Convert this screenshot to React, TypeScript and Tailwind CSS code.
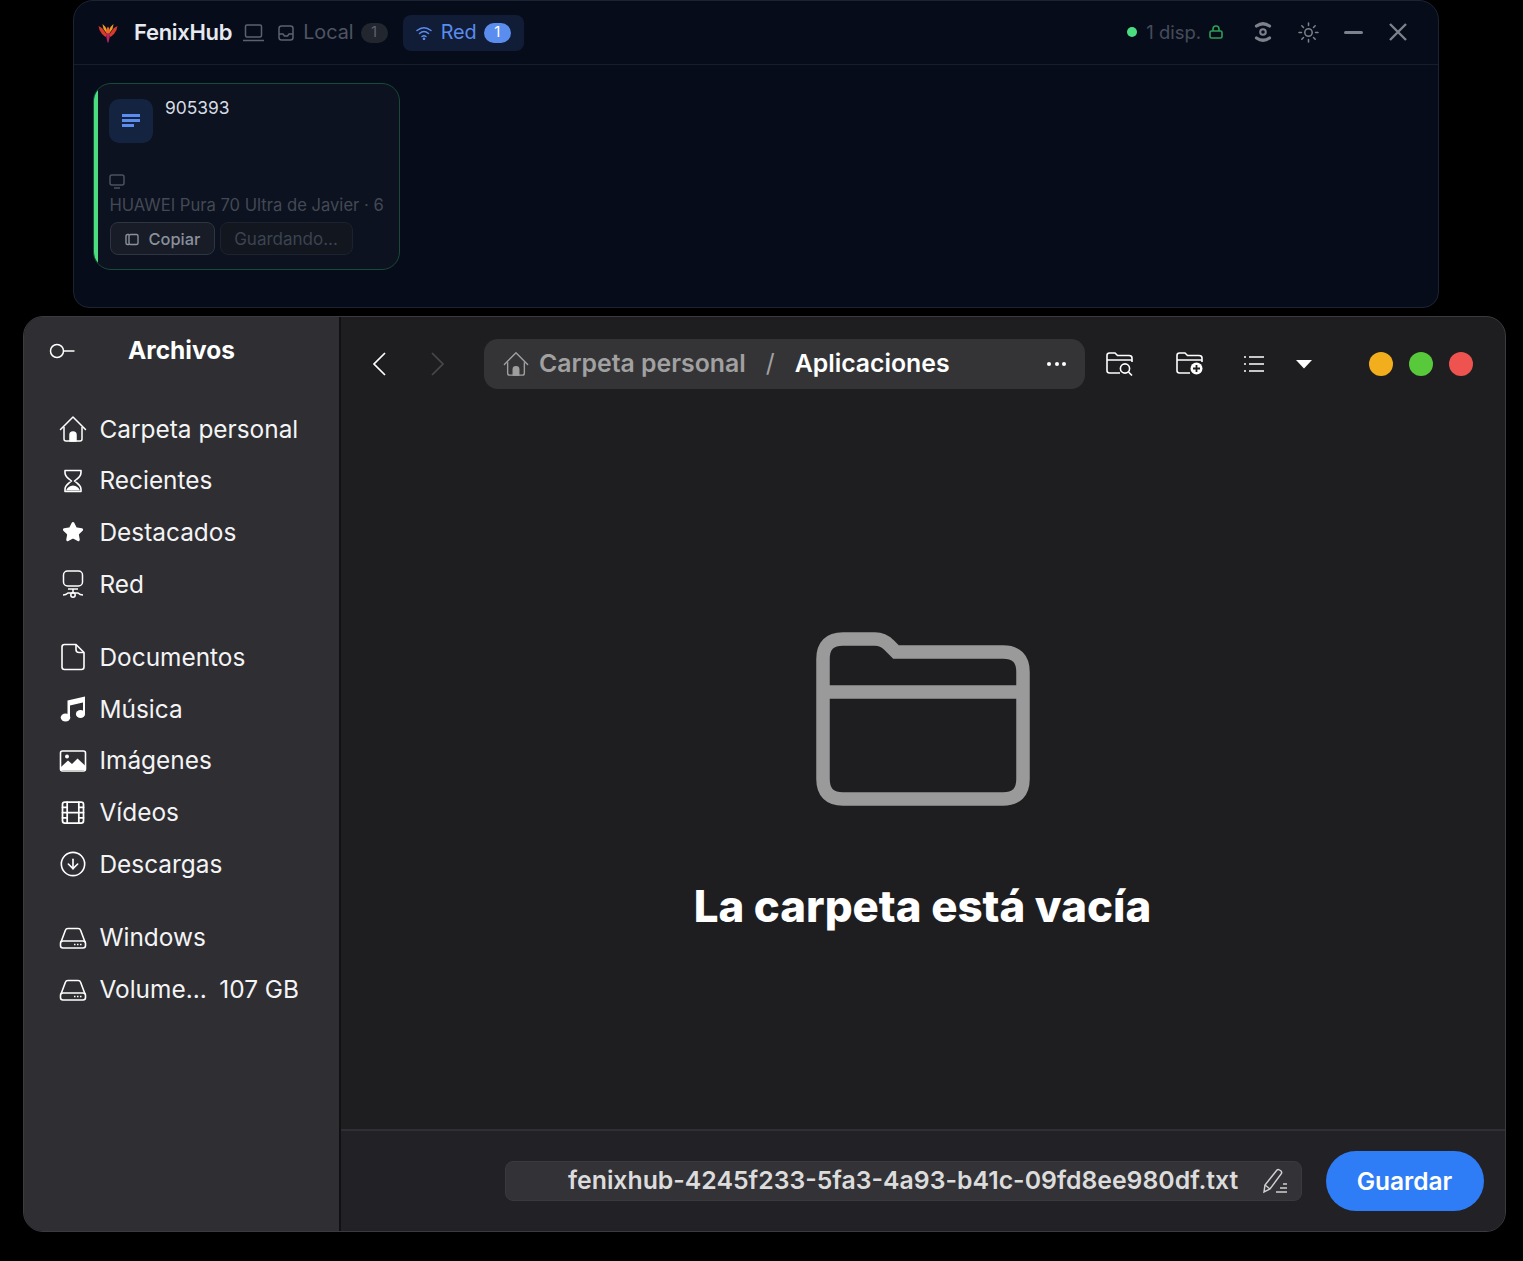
import type { ReactNode } from "react";
import { ArrowDownCircle, Film, Star } from "lucide-react";

// little phoenix logo
function PhoenixLogo() {
  return (
    <svg width="20" height="20" viewBox="0 0 20 20">
      <path d="M0.5 3 L4 5 L7 9 L9 12 L7.5 14 L4 11 L1.5 7 Z" fill="#d93a2b" />
      <path d="M19.5 3 L16 5 L13 9 L11 12 L12.5 14 L16 11 L18.5 7 Z" fill="#d93a2b" />
      <path d="M4.5 1 L7.5 4 L9 8 L8.5 10 L5.5 6 Z" fill="#f0a023" />
      <path d="M15.5 1 L12.5 4 L11 8 L11.5 10 L14.5 6 Z" fill="#f0a023" />
      <path d="M8.5 6 L10 3.5 L11.5 6 L12 10 L10 12 L8 10 Z" fill="#f26a21" />
      <path d="M8 11 L10 10 L12 11 L11.5 15 L10.5 19.5 L9.5 19.5 L8.5 15 Z" fill="#b8245f" />
    </svg>
  );
}

function HomeIcon({ color = "white", size = 28 }: { color?: string; size?: number }) {
  return (
    <svg width={size} height={size} viewBox="0 0 28 28" fill="none" stroke={color} strokeWidth="1.5" strokeLinejoin="round">
      <path d="M1.5 14.5 L14 2 L26.5 14.5" strokeLinecap="round" />
      <path d="M5 12 V24 Q5 26 7 26 H21 Q23 26 23 24 V12" />
      <path d="M11 26 V20 Q11 17 14 17 Q17 17 17 20 V26 Z" fill={color} />
    </svg>
  );
}

function HourglassIcon() {
  return (
    <svg width="28" height="28" viewBox="0 0 28 28" fill="none" stroke="white" strokeWidth="1.6" strokeLinejoin="round">
      <path d="M6 3.5 H22 V5.5 Q22 9 18 12 L15.5 14 L18 16 Q22 19 22 22.5 V24.5 H6 V22.5 Q6 19 10 16 L12.5 14 L10 12 Q6 9 6 5.5 Z" />
      <path d="M7 23.5 Q9 19 14 18.5 Q19 19 21 23.5 Z" fill="white" stroke="none" />
    </svg>
  );
}

function NetworkIcon() {
  return (
    <svg width="28" height="28" viewBox="0 0 28 28" fill="none" stroke="white" strokeWidth="1.5">
      <rect x="4.5" y="1" width="19" height="15" rx="4" />
      <path d="M9 19 H19" />
      <path d="M14 19 V23" />
      <path d="M4 25 Q7 25 9 23 H19 Q21 25 24 25" />
      <circle cx="14" cy="25" r="2.2" />
    </svg>
  );
}

function DocIcon() {
  return (
    <svg width="28" height="28" viewBox="0 0 28 28" fill="none" stroke="white" strokeWidth="1.6" strokeLinejoin="round">
      <path d="M3 4 Q3 1.5 5.5 1.5 H17 L25 9.5 V24 Q25 26.5 22.5 26.5 H5.5 Q3 26.5 3 24 Z" />
      <path d="M17 1.5 V6.5 Q17 9.5 20 9.5 H25" />
    </svg>
  );
}

function MusicIcon() {
  return (
    <svg width="28" height="28" viewBox="0 0 28 28" fill="white">
      <path d="M8.5 5.5 L26 1.5 V7 L11 10.5 V22 H8.5 Z" />
      <path d="M24 6 H26 V19 H24 Z" />
      <ellipse cx="6.5" cy="22.5" rx="4.8" ry="4" />
      <ellipse cx="21.5" cy="19" rx="4.6" ry="4" />
    </svg>
  );
}

function ImageIcon() {
  return (
    <svg width="28" height="28" viewBox="0 0 28 28" fill="none" stroke="white" strokeWidth="1.6">
      <rect x="1.5" y="4" width="25" height="20" rx="2" />
      <circle cx="8" cy="9.5" r="2" fill="white" stroke="none" />
      <path d="M2 23 L2 20 L9 13.5 L13 17 L18.5 11.5 L26 18.5 V23 Z" fill="white" stroke="none" />
    </svg>
  );
}

function DriveIcon() {
  return (
    <svg width="28" height="28" viewBox="0 0 28 28" fill="none" stroke="white" strokeWidth="1.6" strokeLinejoin="round">
      <path d="M2 19 L6.5 7 Q7 5.5 9 5.5 H19 Q21 5.5 21.5 7 L26 19" />
      <rect x="1.5" y="18" width="25" height="7" rx="2.5" />
      <path d="M15 21.5 H22.5" strokeDasharray="1.5 1.5" />
    </svg>
  );
}

function SidebarRow({ icon, label, right }: { icon: ReactNode; label: string; right?: string }) {
  return (
    <div className="flex h-[51.7px] items-center pl-[34.5px] pr-[40px] text-[24.4px] whitespace-nowrap text-[#f4f4f5]">
      <div className="flex w-[28px] shrink-0 justify-center">{icon}</div>
      <span className="ml-[13px]">{label}</span>
      {right && <span className="ml-auto">{right}</span>}
    </div>
  );
}

function FenixWindow() {
  return (
    <div className="ml-[73px] h-[308px] w-[1366px] rounded-[20px] rounded-b-[16px] border border-[#1c2433] bg-[#070c1a]">
      <div className="flex h-[64px] items-center border-b border-[#161d2c] text-[19.8px]">
        <div className="ml-[24px]">
          <PhoenixLogo />
        </div>
        <span className="ml-[16px] text-[22px] font-semibold tracking-[-0.3px] text-[#e6e9f0]">FenixHub</span>
        <svg className="ml-[11px]" width="21" height="18" viewBox="0 0 21 18" fill="none" stroke="#5b6170" strokeWidth="1.5">
          <rect x="2.5" y="1" width="16" height="12" rx="1.5" />
          <path d="M0 16.5 H21" />
        </svg>
        <svg className="ml-[14px]" width="16" height="16" viewBox="0 0 16 16" fill="none" stroke="#5b6170" strokeWidth="1.5" strokeLinejoin="round">
          <rect x="1" y="1" width="14" height="14" rx="2.5" />
          <path d="M1 9 H5 L6.5 11 H9.5 L11 9 H15" />
        </svg>
        <span className="ml-[9px] text-[#4f5563]">Local</span>
        <span className="ml-[7px] flex h-[20px] w-[27px] items-center justify-center rounded-full bg-[#22262f] text-[15px] text-[#5b6170]">1</span>
        <div className="ml-[15px] flex h-[36px] w-[121px] items-center rounded-[8px] bg-[#111c36] pl-[13px]">
          <svg width="16" height="14" viewBox="0 0 16 14" fill="none" stroke="#5b8def" strokeWidth="1.5" strokeLinecap="round">
            <path d="M1 4.5 Q8 -1 15 4.5" />
            <path d="M3.5 7.5 Q8 3.5 12.5 7.5" />
            <path d="M6 10.5 Q8 9 10 10.5" />
            <circle cx="8" cy="12.8" r="0.6" />
          </svg>
          <span className="ml-[9px] text-[#5b8def]">Red</span>
          <span className="ml-[7px] flex h-[20px] w-[27px] items-center justify-center rounded-full bg-[#5b8def] text-[15px] text-white">1</span>
        </div>
        <div className="ml-auto flex items-center">
          <span className="h-[10px] w-[10px] rounded-full bg-[#4ade80]" />
          <span className="ml-[9px] text-[18.4px] text-[#464c5a]">1 disp.</span>
          <svg className="ml-[8px]" width="14" height="14" viewBox="0 0 14 14" fill="none" stroke="#2f9e57" strokeWidth="1.6">
            <rect x="1" y="6" width="12" height="7" rx="1.5" />
            <path d="M4 6 V4 Q4 1 7 1 Q10 1 10 4 V6" />
          </svg>
          <svg className="ml-[31px]" width="18" height="22" viewBox="0 0 18 22" fill="none" stroke="#7d828c" strokeLinecap="round">
            <path d="M2.5 5 Q9 0.5 15.5 5" strokeWidth="3.2" />
            <path d="M2.5 17 Q9 21.5 15.5 17" strokeWidth="3.2" />
            <circle cx="9" cy="11" r="2.8" strokeWidth="2" />
          </svg>
          <svg className="ml-[26px]" width="21" height="21" viewBox="0 0 21 21" fill="none" stroke="#7d828c" strokeWidth="1.5" strokeLinecap="round">
            <circle cx="10.5" cy="10.5" r="3.7" />
            <path d="M10.5 1 V3.5 M10.5 17.5 V20 M1 10.5 H3.5 M17.5 10.5 H20 M3.8 3.8 L5.5 5.5 M15.5 15.5 L17.2 17.2 M3.8 17.2 L5.5 15.5 M15.5 5.5 L17.2 3.8" />
          </svg>
          <div className="ml-[25px] h-[2.5px] w-[19px] rounded-full bg-[#7d828c]" />
          <svg className="ml-[26px] mr-[31px]" width="18" height="18" viewBox="0 0 18 18" fill="none" stroke="#7d828c" strokeWidth="2.4">
            <path d="M1 1 L17 17 M17 1 L1 17" />
          </svg>
        </div>
      </div>
      <div className="pl-[19px] pt-[18px]">
        <div className="relative h-[187px] w-[307px] overflow-hidden rounded-[18px] border border-[#184a35] bg-[#0c121f]">
          <div className="absolute inset-y-0 left-0 w-[4px] bg-[#4ade80]" />
          <div className="flex pl-[15px] pt-[14.5px]">
            <div className="flex h-[44px] w-[44px] items-center justify-center rounded-[10px] bg-[#14233f]">
              <div className="flex flex-col gap-[2px]">
                <div className="h-[3px] w-[18px] bg-[#5b8def]" />
                <div className="h-[3px] w-[18px] bg-[#5b8def]" />
                <div className="h-[3px] w-[12px] bg-[#5b8def]" />
              </div>
            </div>
            <span className="ml-[12px] text-[17.4px] leading-[18px] text-[#d8dce3]">905393</span>
          </div>
          <div className="pl-[15px] pt-[31px]">
            <svg width="16" height="15" viewBox="0 0 16 15" fill="none" stroke="#4b515d" strokeWidth="1.5">
              <rect x="1" y="1" width="14" height="10" rx="2" />
              <path d="M5 14 H11" />
            </svg>
          </div>
          <div className="pl-[15.5px] pt-[6px] text-[16.6px] leading-[20px] whitespace-nowrap text-[#434955]">HUAWEI Pura 70 Ultra de Javier · 6</div>
          <div className="mt-[7px] flex gap-[5px] pl-[15.5px] text-[17px]">
            <div className="flex h-[33px] w-[105px] items-center rounded-[8px] border border-[#2f3541] bg-[#171c27] pl-[14px] pt-[2px] text-[#8b909b]">
              <svg width="14" height="13" viewBox="0 0 14 13" fill="none" stroke="#8b909b" strokeWidth="1.4">
                <rect x="4" y="1.5" width="9" height="10" rx="1.5" />
                <path d="M4 1.5 H2.5 Q1 1.5 1 3 V10 Q1 11.5 2.5 11.5 H4" />
              </svg>
              <span className="ml-[10px] text-[16.4px] font-medium">Copiar</span>
            </div>
            <div className="flex h-[33px] w-[133px] items-center justify-center rounded-[8px] border border-[#1d222e] bg-[#11161f] pt-[4px] text-[#3d434f]">Guardando...</div>
          </div>
        </div>
      </div>
    </div>
  );
}

function FilesWindow() {
  return (
    <div className="mt-[8px] ml-[23px] flex h-[916px] w-[1483px] overflow-hidden rounded-[20px] border border-[#3a3a3f] bg-[#1e1e20]">
      <aside className="w-[315px] shrink-0 bg-[#2e2e33]">
        <div className="flex h-[67px] items-center pl-[24px]">
          <svg width="27" height="16" viewBox="0 0 27 16" fill="none" stroke="white" strokeWidth="1.5">
            <circle cx="9" cy="8" r="6.5" />
            <path d="M15.5 8 H26.5" />
          </svg>
          <span className="ml-[53px] text-[24.5px] font-bold text-white">Archivos</span>
        </div>
        <div className="pt-[19.1px]">
          <SidebarRow icon={<HomeIcon />} label="Carpeta personal" />
          <SidebarRow icon={<HourglassIcon />} label="Recientes" />
          <SidebarRow icon={<Star size={22} fill="white" color="white" />} label="Destacados" />
          <SidebarRow icon={<NetworkIcon />} label="Red" />
          <div className="h-[21.5px]" />
          <SidebarRow icon={<DocIcon />} label="Documentos" />
          <SidebarRow icon={<MusicIcon />} label="Música" />
          <SidebarRow icon={<ImageIcon />} label="Imágenes" />
          <SidebarRow icon={<Film size={29} color="white" strokeWidth={1.5} />} label="Vídeos" />
          <SidebarRow icon={<ArrowDownCircle size={28} color="white" strokeWidth={1.4} />} label="Descargas" />
          <div className="h-[21.5px]" />
          <SidebarRow icon={<DriveIcon />} label="Windows" />
          <SidebarRow icon={<DriveIcon />} label="Volume..." right="107 GB" />
        </div>
      </aside>
      <div className="w-[2px] shrink-0 bg-[#111113]" />
      <main className="flex min-w-0 flex-1 flex-col">
        <div className="flex h-[94px] items-center">
          <svg className="ml-[30px]" width="16" height="26" viewBox="0 0 16 26" fill="none" stroke="white" strokeWidth="1.7">
            <path d="M14 2 L3 13 L14 24" />
          </svg>
          <svg className="ml-[42px]" width="16" height="26" viewBox="0 0 16 26" fill="none" stroke="#48484b" strokeWidth="1.7">
            <path d="M3 2 L14 13 L3 24" />
          </svg>
          <div className="ml-[39px] flex h-[50px] w-[601px] items-center rounded-[14px] bg-[#343437] pl-[19px] pr-[19px] text-[24.8px] font-semibold">
            <HomeIcon color="#9f9f9f" size={26} />
            <span className="ml-[10px] text-[#a1a1a1]">Carpeta personal</span>
            <span className="ml-[20px] font-normal text-[#a1a1a1]">/</span>
            <span className="ml-[20px] text-white">Aplicaciones</span>
            <div className="ml-auto flex gap-[3.5px]">
              <span className="h-[4px] w-[4px] rounded-full bg-white" />
              <span className="h-[4px] w-[4px] rounded-full bg-white" />
              <span className="h-[4px] w-[4px] rounded-full bg-white" />
            </div>
          </div>
          <svg className="ml-[21px]" width="28" height="24" viewBox="0 0 28 24" fill="none" stroke="white" strokeWidth="1.6">
            <path d="M14 21 H3.5 Q1 21 1 18.5 V3.5 Q1 1 3.5 1 H9 L11.5 3.5 H23 Q26 3.5 26 6 V10" />
            <path d="M1 8 H26" />
            <circle cx="19" cy="16.5" r="4.6" />
            <path d="M22.5 20 L26 23.5" />
          </svg>
          <svg className="ml-[42px]" width="28" height="24" viewBox="0 0 28 24" fill="none" stroke="white" strokeWidth="1.6">
            <path d="M14 21 H3.5 Q1 21 1 18.5 V3.5 Q1 1 3.5 1 H9 L11.5 3.5 H23 Q26 3.5 26 6 V10" />
            <path d="M1 8 H26" />
            <circle cx="20.5" cy="16.5" r="6" fill="white" stroke="none" />
            <path d="M20.5 13 V20 M17 16.5 H24" stroke="#1e1e20" strokeWidth="1.8" />
          </svg>
          <svg className="ml-[40px]" width="20" height="18" viewBox="0 0 20 18" fill="none" stroke="white" strokeWidth="1.5">
            <path d="M0 2 H2 M5 2 H20 M0 9 H2 M5 9 H20 M0 16 H2 M5 16 H20" />
          </svg>
          <svg className="ml-[32px]" width="16" height="10" viewBox="0 0 16 10">
            <path d="M0 1 H16 L8 9.5 Z" fill="white" />
          </svg>
          <div className="ml-[57px] flex gap-[16px]">
            <span className="h-[24px] w-[24px] rounded-full bg-[#f2ae1c]" />
            <span className="h-[24px] w-[24px] rounded-full bg-[#57c93b]" />
            <span className="h-[24px] w-[24px] rounded-full bg-[#ee5350]" />
          </div>
        </div>
        <div className="flex flex-1 flex-col items-center pt-[221px] pr-[1px]">
          <svg width="214" height="174" viewBox="0 0 214 174" fill="none" stroke="#9a9a9a" strokeWidth="13.5">
            <path d="M7 27 Q7 7 27 7 H59 Q67 7 73 13 L80 20 H187 Q207 20 207 40 V147 Q207 167 187 167 H27 Q7 167 7 147 Z" />
            <path d="M7 60 H207" />
          </svg>
          <h1 className="mt-[71px] text-[43.8px] leading-[60px] font-extrabold text-white">La carpeta está vacía</h1>
        </div>
        <div className="flex h-[102px] shrink-0 items-center border-t-2 border-[#303034] bg-[#222226]">
          <div className="ml-[164px] flex h-[40px] w-[797px] items-center rounded-[8px] border border-[#3a3a3e] bg-[#323237] pl-[62px] text-[24.8px] font-semibold whitespace-nowrap text-[#dcdcdc]">
            <span>fenixhub-4245f233-5fa3-4a93-b41c-09fd8ee980df.txt</span>
            <svg className="ml-[24px]" width="26" height="26" viewBox="0 0 26 26" fill="none" stroke="#cfcfcf" strokeWidth="1.5">
              <path d="M2 24 L3 17 L15 2 Q16 1 17.5 2 L19 3 Q20 4 19.5 5.5 L8 21 Z" />
              <path d="M3 17 L8 21" />
              <path d="M14 24 H25 M18 20 H25 M21 16 H25" />
            </svg>
          </div>
          <div className="ml-[24px] flex h-[60px] w-[158px] items-center justify-center rounded-full bg-[#2e7cf6] pr-[1px] text-[24.5px] font-semibold text-white">Guardar</div>
        </div>
      </main>
    </div>
  );
}

export default function App() {
  return (
    <div className="h-[1261px] w-[1523px] overflow-hidden bg-black font-['Inter',sans-serif]">
      <FenixWindow />
      <FilesWindow />
    </div>
  );
}
